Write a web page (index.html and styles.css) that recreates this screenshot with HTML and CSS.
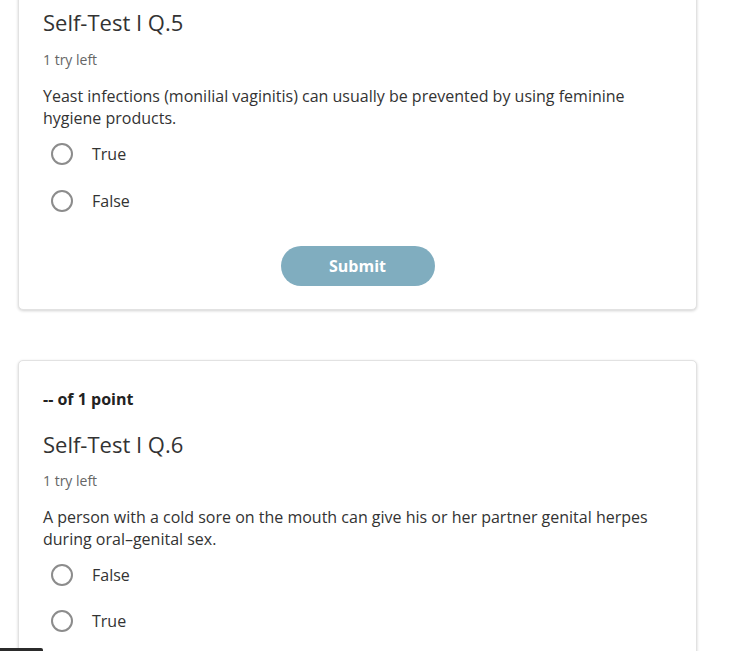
FILE: index.html
```html
<!DOCTYPE html>
<html lang="en">
<head>
<meta charset="utf-8">
<title>Self-Test</title>
<link rel="stylesheet" href="styles.css">
</head>
<body>
<main class="page">
  <section class="card card-first">
    <div class="points">-- of 1 point</div>
    <h2 class="title">Self-Test I Q.5</h2>
    <div class="tries">1 try left</div>
    <p class="question">Yeast infections (monilial vaginitis) can usually be prevented by using feminine hygiene products.</p>
    <div class="options">
      <label class="option"><span class="radio"></span><span class="label">True</span></label>
      <label class="option"><span class="radio"></span><span class="label">False</span></label>
    </div>
    <div class="actions"><button class="submit" type="button">Submit</button></div>
  </section>
  <section class="card">
    <div class="points">-- of 1 point</div>
    <h2 class="title">Self-Test I Q.6</h2>
    <div class="tries">1 try left</div>
    <p class="question">A person with a cold sore on the mouth can give his or her partner genital herpes during oral–genital sex.</p>
    <div class="options">
      <label class="option"><span class="radio"></span><span class="label">False</span></label>
      <label class="option"><span class="radio"></span><span class="label">True</span></label>
    </div>
    <div class="actions"><button class="submit" type="button">Submit</button></div>
  </section>
</main>
<div class="corner-bar"></div>
</body>
</html>
```
FILE: styles.css
```css
html, body {
  margin: 0;
  padding: 0;
  background: #ffffff;
  overflow: hidden;
}
body {
  font-family: "Open Sans", "Noto Sans", sans-serif;
  color: #333333;
}
.page {
  padding-left: 18px;
  width: 679px;
  display: flex;
  flex-direction: column;
  gap: 50px;
}
.card {
  box-sizing: border-box;
  width: 679px;
  border: 1px solid #e2e2e2;
  border-radius: 5px;
  box-shadow: 0 1px 3px rgba(0, 0, 0, 0.18);
  padding: 26px 24px 23px 24px;
  background: #fff;
}
.card-first {
  margin-top: -61px;
}
.points {
  font-size: 16px;
  line-height: 24px;
  font-weight: 700;
  color: #222;
}
.title {
  margin: 18px 0 0 0;
  font-size: 22px;
  line-height: 30px;
  font-weight: 400;
  color: #333;
}
.card-first .title {
  margin-top: 17px;
}
.card-first .tries {
  margin-top: 13px;
}
.tries {
  margin-top: 12px;
  font-size: 14px;
  line-height: 20px;
  color: #666;
}
.question {
  margin: 15px 0 0 0;
  font-size: 16px;
  line-height: 22px;
  color: #333;
  max-width: 610px;
}
.options {
  margin-top: 2px;
  display: flex;
  flex-direction: column;
}
.option {
  height: 46px;
  display: flex;
  align-items: center;
  padding-left: 8px;
}
.card-first .option + .option {
  margin-top: 1px;
}
.radio {
  box-sizing: border-box;
  width: 22px;
  height: 22px;
  border: 2px solid #8c8c8c;
  border-radius: 50%;
  flex: none;
}
.label {
  margin-left: 19px;
  font-size: 16px;
  color: #333;
}
.actions {
  margin-top: 22px;
  display: flex;
  justify-content: center;
}
.submit {
  width: 154px;
  height: 40px;
  border: none;
  border-radius: 20px;
  background: #80adbf;
  color: #ffffff;
  font-family: "Open Sans", "Noto Sans", sans-serif;
  font-size: 16px;
  font-weight: 700;
  cursor: pointer;
}
.corner-bar {
  position: fixed;
  left: 0;
  bottom: 0;
  width: 43px;
  height: 3px;
  background: #2b2b2b;
  border-top-right-radius: 2px;
}
```
